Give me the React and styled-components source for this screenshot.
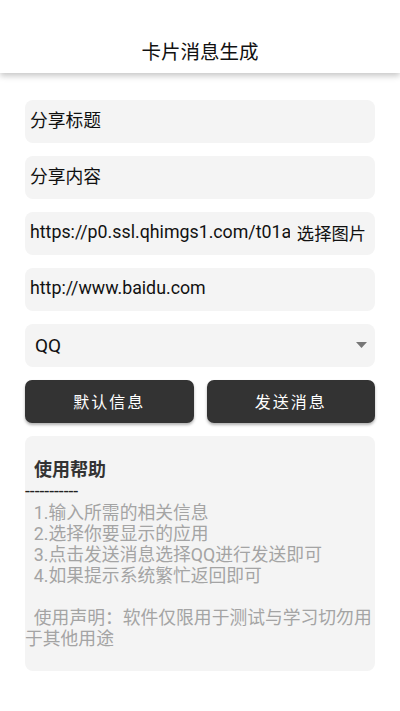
import React from "react";
import styled, { createGlobalStyle } from "styled-components";

const fontStack = `Roboto, "Noto Sans CJK SC", sans-serif`;

const GlobalStyle = createGlobalStyle`
  html, body {
    margin: 0;
    padding: 0;
    background: #fff;
    font-family: ${fontStack};
  }
  * { box-sizing: border-box; }
`;

export default function App() {
  return (
    <>
      <GlobalStyle />
      <Page>
        <Header>卡片消息生成</Header>
        <Form>
          <Field>
            <TextInput defaultValue="分享标题" />
          </Field>
          <Field>
            <TextInput defaultValue="分享内容" />
          </Field>
          <Field>
            <TextInput defaultValue="https://p0.ssl.qhimgs1.com/t01a4f2b3c6d8e9" />
            <PickButton>选择图片</PickButton>
          </Field>
          <Field>
            <TextInput defaultValue="http://www.baidu.com" />
          </Field>
          <SelectBox>
            <span>QQ</span>
            <svg width="11" height="6" viewBox="0 0 11 6">
              <path d="M0 0 L11 0 L5.5 6 Z" fill="#777" />
            </svg>
          </SelectBox>
          <ButtonRow>
            <DarkButton>默认信息</DarkButton>
            <DarkButton>发送消息</DarkButton>
          </ButtonRow>
          <HelpCard>
            <HelpTitle>{"  使用帮助"}</HelpTitle>
            <Divider>-----------</Divider>
            <HelpText>
              {"  1.输入所需的相关信息\n  2.选择你要显示的应用\n  3.点击发送消息选择QQ进行发送即可\n  4.如果提示系统繁忙返回即可\n\n  使用声明：软件仅限用于测试与学习切勿用于其他用途"}
            </HelpText>
          </HelpCard>
        </Form>
      </Page>
    </>
  );
}

const Page = styled.div`
  width: 400px;
  min-height: 711px;
  background: #fff;
`;

const Header = styled.header`
  height: 73px;
  display: flex;
  align-items: flex-end;
  justify-content: center;
  padding-bottom: 8px;
  font-size: 19.5px;
  color: #111;
  background: #fff;
  box-shadow: 0 3px 6px rgba(0, 0, 0, 0.22);
  position: relative;
  z-index: 1;
`;

const Form = styled.main`
  display: flex;
  flex-direction: column;
  gap: 13px;
  padding: 27px 25px 0;
`;

const Field = styled.div`
  height: 43px;
  display: flex;
  align-items: center;
  background: #f4f4f4;
  border-radius: 8px;
  overflow: hidden;
`;

const TextInput = styled.input`
  flex: 1;
  min-width: 0;
  height: 100%;
  border: none;
  outline: none;
  background: transparent;
  padding: 0 0 5px 5px;
  font-family: ${fontStack};
  font-size: 17.8px;
  color: #111;
`;

const PickButton = styled.span`
  flex: none;
  padding: 0 9px 3px 7px;
  font-size: 17.3px;
  color: #111;
`;

const SelectBox = styled.div`
  height: 43px;
  display: flex;
  align-items: center;
  justify-content: space-between;
  padding: 0 8px 1px 10px;
  background: #f4f4f4;
  border-radius: 8px;
  font-size: 19px;
  color: #111;
`;

const ButtonRow = styled.div`
  display: grid;
  grid-template-columns: 1fr 1fr;
  gap: 13px;
`;

const DarkButton = styled.button`
  height: 43px;
  border: none;
  border-radius: 7px;
  background: #333;
  color: #fff;
  font-family: ${fontStack};
  font-size: 16px;
  letter-spacing: 2px;
  padding-bottom: 2px;
  box-shadow: 0 2px 3px rgba(0, 0, 0, 0.3);
`;

const HelpCard = styled.section`
  height: 235px;
  background: #f4f4f4;
  border-radius: 8px;
  padding-top: 23px;
`;

const HelpTitle = styled.div`
  white-space: pre;
  font-size: 18px;
  line-height: 22px;
  font-weight: 700;
  color: #333;
`;

const Divider = styled.div`
  font-size: 17.5px;
  line-height: 21px;
  color: #222;
`;

const HelpText = styled.div`
  white-space: pre-wrap;
  font-size: 17.8px;
  line-height: 21px;
  color: #a4a4a4;
`;
